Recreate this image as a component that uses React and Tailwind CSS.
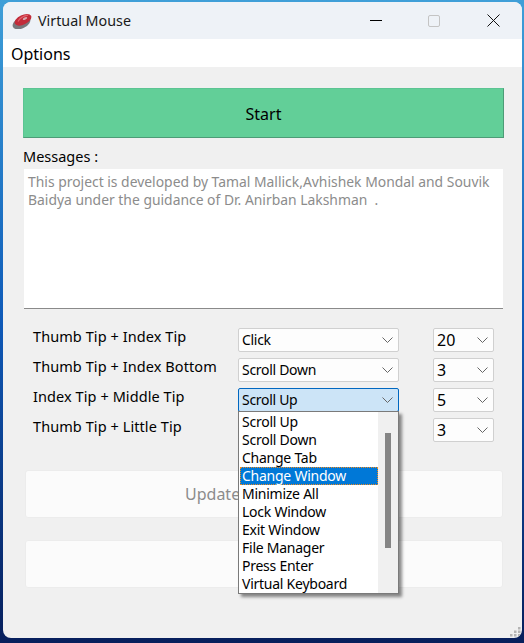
const combos = [
  { label: 'Thumb Tip + Index Tip', action: 'Click', count: '20' },
  { label: 'Thumb Tip + Index Bottom', action: 'Scroll Down', count: '3' },
  { label: 'Index Tip + Middle Tip', action: 'Scroll Up', count: '5', open: true },
  { label: 'Thumb Tip + Little Tip', count: '3', hidden: true },
];

const options = [
  'Scroll Up',
  'Scroll Down',
  'Change Tab',
  'Change Window',
  'Minimize All',
  'Lock Window',
  'Exit Window',
  'File Manager',
  'Press Enter',
  'Virtual Keyboard',
];

function Chevron() {
  return (
    <svg width="11" height="6" viewBox="0 0 11 6" fill="none" stroke="#666" strokeWidth="1">
      <path d="M0.5 0.5L5.5 5.5L10.5 0.5" />
    </svg>
  );
}

function MouseIcon() {
  return (
    <svg width="21" height="16" viewBox="0 0 21 16">
      <ellipse cx="9.5" cy="9.8" rx="9.5" ry="5.6" fill="#77787c" transform="rotate(-26 9.5 9.8)" />
      <ellipse cx="11" cy="6.8" rx="9" ry="4.8" fill="#c22c3a" transform="rotate(-26 11 6.8)" />
      <path d="M6 8.5C8 5 12 2.8 16 2.2" stroke="#e2616c" strokeWidth="1.2" fill="none" />
      <ellipse cx="13" cy="5.5" rx="2.4" ry="1.2" fill="#d9a7ad" transform="rotate(-26 13 5.5)" />
    </svg>
  );
}

function Combo({ value, open, large, className }) {
  return (
    <div
      className={`flex h-6 items-center justify-between rounded-[2px] border pl-[3px] pr-[5px] ${
        open ? 'border-[#0067c0] bg-[#cce4f7]' : 'border-[#d0d0d0] bg-[#fdfdfd]'
      } ${className}`}
    >
      <span className={`pb-px leading-none text-black ${large ? 'text-[16px]' : 'text-[14px] tracking-[-0.3px]'}`}>{value}</span>
      <Chevron />
    </div>
  );
}

function SizeGrip() {
  return (
    <svg className="absolute bottom-[1px] right-[1px]" width="11" height="10" viewBox="0 0 11 10" fill="#b4b4b4">
      <rect x="8" y="0" width="2.5" height="2.5" />
      <rect x="4" y="3.5" width="2.5" height="2.5" />
      <rect x="8" y="3.5" width="2.5" height="2.5" />
      <rect x="0" y="7" width="2.5" height="2.5" />
      <rect x="4" y="7" width="2.5" height="2.5" />
      <rect x="8" y="7" width="2.5" height="2.5" />
    </svg>
  );
}

export default function App() {
  return (
    <div className="h-[643px] w-[524px] overflow-hidden bg-gradient-to-b from-[#3f9fd8] via-[#0f5ab8] to-[#071f5c] pl-[3px] pr-[2px] pt-[2px] font-['Noto_Sans',sans-serif]">
      <div className="relative flex h-[636px] flex-col overflow-hidden rounded-lg bg-[#f0f0f0]">
        {/* Title bar */}
        <div className="flex h-[37px] items-center bg-[#eef2f7] pl-[9px]">
          <MouseIcon />
          <span className="ml-[5px] text-[14.3px] text-[#1a1a1a]">Virtual Mouse</span>
          <div className="ml-auto flex items-center">
            <div className="h-px w-3 bg-black" />
            <div className="ml-[46px] h-3 w-3 rounded-[2px] border border-[#c4c4c4]" />
            <svg className="ml-[47px] mr-[22px]" width="13" height="13" viewBox="0 0 13 13" stroke="#111" strokeWidth="1" fill="none">
              <path d="M0.5 0.5L12.5 12.5M12.5 0.5L0.5 12.5" />
            </svg>
          </div>
        </div>

        {/* Menu */}
        <div className="flex h-7 items-center bg-white pl-2 pt-px text-[16px] text-black">Options</div>

        {/* Content */}
        <div className="flex flex-1 flex-col pl-5 pr-[18px] pt-[21px]">
          <button className="flex h-[50px] w-[481px] items-center justify-center border border-[#5cc493] border-b-[#4d9c77] border-r-[#4d9c77] bg-[#62cf98] pt-[2px] text-[16px] text-black">
            Start
          </button>
          <div className="mt-[9px] h-[22px] text-[14.5px] leading-[18px] text-black">Messages :</div>
          <div className="ml-px h-[140px] w-[479px] border-b border-[#8a8a8a] bg-white px-[4px] pt-1 text-[13.9px] leading-[18px] text-[#8c8c8c]">
            This project is developed by Tamal Mallick,Avhishek Mondal and Souvik Baidya under the guidance of Dr. Anirban Lakshman&nbsp;&nbsp;.
          </div>

          <div className="mt-[19px] flex flex-col gap-[6px]">
            {combos.map((c) => (
              <div key={c.label} className="flex h-6 items-start">
                <div className="ml-[10px] w-[205px] pt-px text-[14.5px] leading-[14px] tracking-[0.08px] text-black">{c.label}</div>
                {c.hidden ? <div className="w-[161px]" /> : <Combo value={c.action} open={c.open} className="w-[161px]" />}
                <Combo value={c.count} large className="ml-[34px] w-[61px]" />
              </div>
            ))}
          </div>

          <div className="ml-[2px] mt-7 flex h-12 w-[478px] items-center rounded-[3px] border border-[#ececec] bg-[#fbfbfb] pl-[159px] text-[16px] text-[#8c8c8c]">
            Update
          </div>
          <div className="ml-[2px] mt-[22px] h-12 w-[478px] rounded-[3px] border border-[#ececec] bg-[#fbfbfb]" />
        </div>

        {/* Open dropdown list */}
        <div className="absolute left-[235px] top-[409px] flex h-[183px] w-[161px] border border-[#7a7a7a] bg-white shadow-[3px_3px_3px_rgba(0,0,0,0.45)]">
          <div className="flex w-[139px] flex-col pl-px pt-px">
            {options.map((o) => (
              <div
                key={o}
                className={`h-[18px] pl-[2px] text-[14px] tracking-[-0.25px] ${
                  o === 'Change Window'
                    ? 'border border-dotted border-[#f08a1d] bg-[#0078d7] pl-px leading-[16px] text-white'
                    : 'leading-[18px] text-black'
                }`}
              >
                {o}
              </div>
            ))}
          </div>
          <div className="flex flex-1 justify-center bg-[#f0f0f0] pt-[21px]">
            <div className="h-[115px] w-[6px] bg-[#858585]" />
          </div>
        </div>

        <SizeGrip />
      </div>
    </div>
  );
}
